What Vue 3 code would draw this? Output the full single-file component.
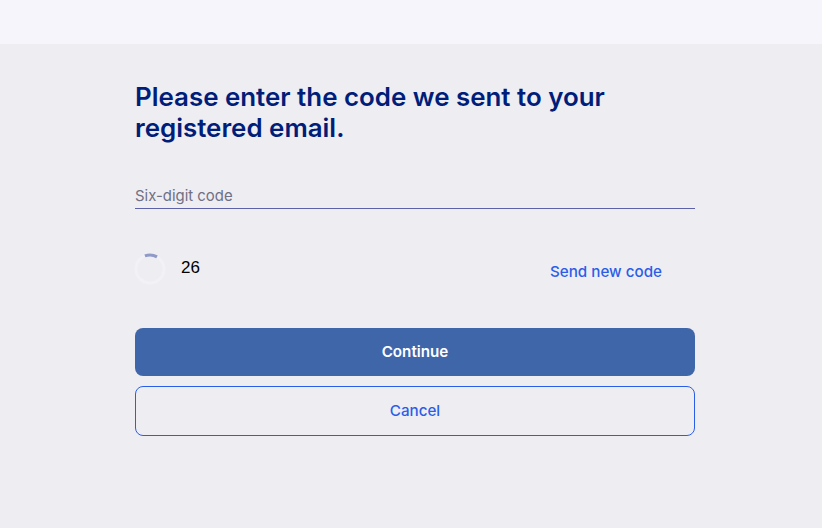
<script setup>
import { ref } from "vue";

const code = ref("");
const seconds = ref(26);
</script>

<template>
  <div class="page">
    <div class="topbar"></div>
    <main class="content">
      <div class="panel">
        <h1>Please enter the code we sent to your registered email.</h1>
        <input v-model="code" class="code-input" type="text" placeholder="Six-digit code">
        <div class="timer-row">
          <div class="timer">
            <svg class="spinner" width="32" height="32" viewBox="0 0 32 32">
              <circle cx="16" cy="16" r="14" fill="none" stroke="#f1f1f6" stroke-width="3" />
              <path d="M10.9 2.9 A14 14 0 0 1 23 3.9" fill="none" stroke="#8f9ac9" stroke-width="3" />
            </svg>
            <span class="seconds">{{ seconds }}</span>
          </div>
          <button class="link">Send new code</button>
        </div>
        <button class="btn primary">Continue</button>
        <button class="btn outline">Cancel</button>
      </div>
    </main>
  </div>
</template>

<style scoped>
.page {
  height: 528px;
  display: flex;
  flex-direction: column;
  background-color: #eeedf2;
  font-family: "Inter", "Liberation Sans", sans-serif;
  overflow: hidden;
}

.topbar {
  height: 44px;
  background-color: #f6f5fb;
}

.content {
  padding-left: 135px;
}

.panel {
  width: 560px;
  display: flex;
  flex-direction: column;
}

h1 {
  margin: 37px 0 0;
  width: 500px;
  font-size: 25.9px;
  line-height: 31px;
  font-weight: 600;
  color: #001e79;
}

.code-input {
  margin-top: 39px;
  height: 24px;
  padding: 2px 0 0;
  box-sizing: content-box;
  border: none;
  border-bottom: 1px solid #5d62a8;
  background: transparent;
  font-family: inherit;
  font-size: 14.9px;
  outline: none;
}

.code-input::placeholder {
  color: #6f7085;
  opacity: 1;
}

.timer-row {
  margin-top: 44px;
  height: 32px;
  display: flex;
  justify-content: space-between;
  align-items: flex-start;
}

.timer {
  display: flex;
  align-items: center;
  gap: 15px;
}

.spinner {
  display: block;
  margin-left: -1px;
}

.seconds {
  font-family: "Liberation Sans", sans-serif;
  font-size: 17px;
  color: #000;
  margin-top: -2px;
}

.link {
  margin: 9px 33px 0 0;
  padding: 0;
  border: none;
  background: none;
  color: #2a5ee8;
  font-family: inherit;
  font-size: 15.2px;
  font-weight: 500;
  line-height: 20px;
}

.btn {
  width: 100%;
  padding: 0 0 2px;
  font-family: inherit;
  font-size: 15.2px;
  border-radius: 8px;
}

.primary {
  margin-top: 43px;
  height: 48px;
  border: none;
  background-color: #4066aa;
  color: #fff;
  font-weight: 600;
}

.outline {
  margin-top: 10px;
  height: 50px;
  border: 1px solid #2a5ee8;
  background: transparent;
  color: #2a5ee8;
  font-weight: 500;
}
</style>
